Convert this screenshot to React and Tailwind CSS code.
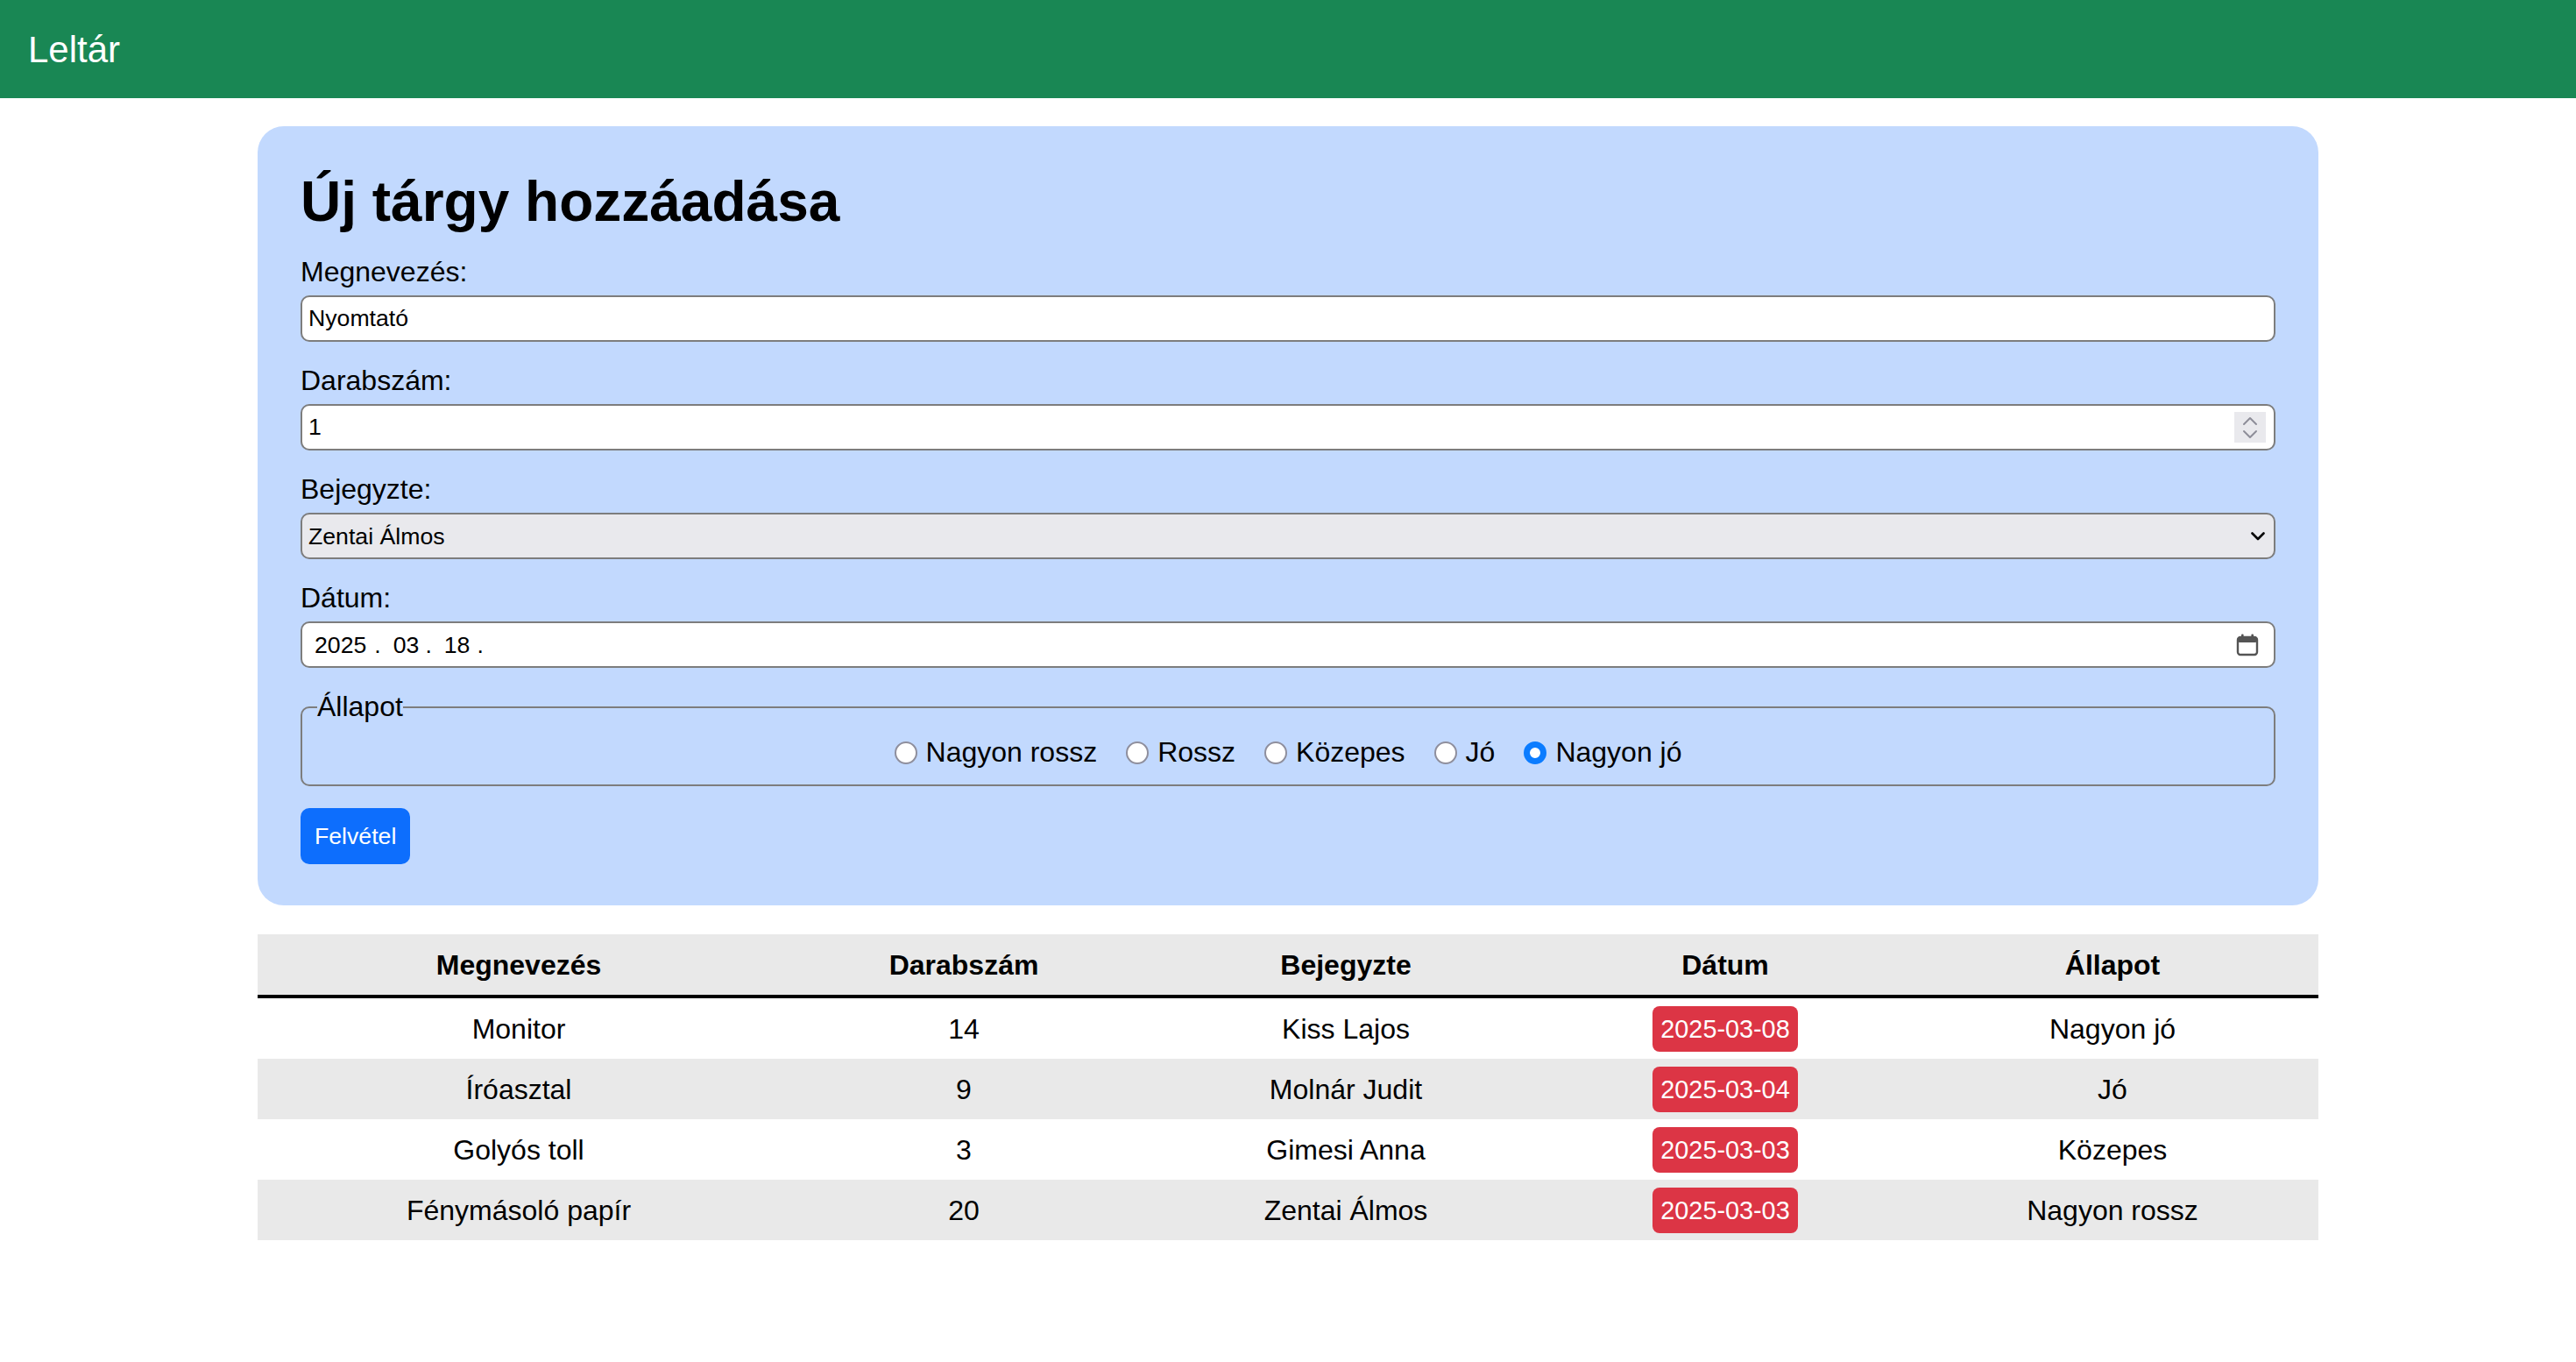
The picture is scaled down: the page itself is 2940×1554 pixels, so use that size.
import { useState } from 'react';

const ITEMS = [
  { name: 'Monitor', qty: 14, by: 'Kiss Lajos', date: '2025-03-08', state: 'Nagyon jó' },
  { name: 'Íróasztal', qty: 9, by: 'Molnár Judit', date: '2025-03-04', state: 'Jó' },
  { name: 'Golyós toll', qty: 3, by: 'Gimesi Anna', date: '2025-03-03', state: 'Közepes' },
  { name: 'Fénymásoló papír', qty: 20, by: 'Zentai Álmos', date: '2025-03-03', state: 'Nagyon rossz' },
];

const STATES = ['Nagyon rossz', 'Rossz', 'Közepes', 'Jó', 'Nagyon jó'];

function Spinner() {
  return (
    <svg width="36" height="35" viewBox="0 0 36 35" className="mr-[9px] shrink-0">
      <rect width="36" height="35" fill="#e9e9ed" />
      <path d="M11 14 L18 7 L25 14" fill="none" stroke="#8e8e99" strokeWidth="2" strokeLinecap="round" strokeLinejoin="round" />
      <path d="M11 22 L18 29 L25 22" fill="none" stroke="#8e8e99" strokeWidth="2" strokeLinecap="round" strokeLinejoin="round" />
    </svg>
  );
}

function Chevron() {
  return (
    <svg width="16" height="10" viewBox="0 0 16 10" className="mr-[10px] shrink-0">
      <path d="M1.5 1.5 L8 8 L14.5 1.5" fill="none" stroke="#000" strokeWidth="2.6" strokeLinecap="round" strokeLinejoin="round" />
    </svg>
  );
}

function CalendarIcon() {
  return (
    <svg width="26" height="26" viewBox="0 0 26 26" className="ml-auto mr-[17px] shrink-0">
      <rect x="2" y="4" width="22" height="20" rx="3" fill="none" stroke="#545454" strokeWidth="2.4" />
      <rect x="2" y="4" width="22" height="6" rx="2" fill="#545454" />
      <rect x="6" y="0.5" width="2.6" height="5" rx="1" fill="#545454" />
      <rect x="17.4" y="0.5" width="2.6" height="5" rx="1" fill="#545454" />
    </svg>
  );
}

export default function App() {
  const [name, setName] = useState('Nyomtató');
  const [qty, setQty] = useState('1');
  const [by, setBy] = useState('Zentai Álmos');
  const [state, setState] = useState('Nagyon jó');

  return (
    <div className="min-h-screen bg-white font-['Liberation_Sans',Arial,sans-serif] text-black">
      {/* Header */}
      <header className="flex h-[112px] items-center bg-[#198754] pl-[32px]">
        <span className="text-[42px] text-white">Leltár</span>
      </header>

      {/* Form card */}
      <form
        onSubmit={(e) => e.preventDefault()}
        className="mx-auto mt-[32px] w-4/5 rounded-[30px] bg-[#c2d9fe] px-[49px] pt-[49px] pb-[47px]"
      >
        <h1 className="mb-[25px] text-[64px] font-bold leading-[74px]">Új tárgy hozzáadása</h1>

        <label className="mb-[8px] block text-[32px] leading-[37px]">Megnevezés:</label>
        <div className="mb-[26px] flex h-[53px] items-center rounded-[10px] border-2 border-[#7d7d7d] bg-white">
          <input
            type="text"
            value={name}
            onChange={(e) => setName(e.target.value)}
            className="h-full flex-1 bg-transparent pl-[7px] text-[26.67px] outline-none"
          />
        </div>

        <label className="mb-[8px] block text-[32px] leading-[37px]">Darabszám:</label>
        <div className="mb-[26px] flex h-[53px] items-center rounded-[10px] border-2 border-[#7d7d7d] bg-white">
          <input
            type="text"
            value={qty}
            onChange={(e) => setQty(e.target.value)}
            className="h-full flex-1 bg-transparent pl-[7px] text-[26.67px] outline-none"
          />
          <Spinner />
        </div>

        <label className="mb-[8px] block text-[32px] leading-[37px]">Bejegyzte:</label>
        <div className="mb-[26px] flex h-[53px] items-center rounded-[10px] border-2 border-[#7d7d7d] bg-[#e9e9ed]">
          <select
            value={by}
            onChange={(e) => setBy(e.target.value)}
            className="h-full flex-1 appearance-none bg-transparent pl-[7px] text-[26.67px] outline-none"
          >
            <option>Kiss Lajos</option>
            <option>Molnár Judit</option>
            <option>Gimesi Anna</option>
            <option>Zentai Álmos</option>
          </select>
          <Chevron />
        </div>

        <label className="mb-[8px] block text-[32px] leading-[37px]">Dátum:</label>
        <div className="mb-[26px] flex h-[53px] items-center rounded-[10px] border-2 border-[#7d7d7d] bg-white pl-[14px] text-[26.67px]">
          <span>2025</span>
          <span className="ml-[9px]">.</span>
          <span className="ml-[14px]">03</span>
          <span className="ml-[7px]">.</span>
          <span className="ml-[14px]">18</span>
          <span className="ml-[8px]">.</span>
          <CalendarIcon />
        </div>

        <fieldset className="rounded-[10px] border-2 border-[#7d7d7d] px-[17px] pt-[15px] pb-[18px]">
          <legend className="text-[32px] leading-[37px]">Állapot</legend>
          <div className="flex items-center justify-center gap-[33px] text-[32px] leading-[37px]">
            {STATES.map((s) => (
              <label key={s} className="flex items-center">
                <input
                  type="radio"
                  name="allapot"
                  checked={state === s}
                  onChange={() => setState(s)}
                  className="h-[26px] w-[26px] appearance-none rounded-full border-2 border-[#8f8f9d] bg-white checked:border-[7px] checked:border-[#0b7cff]"
                />
                <span className="ml-[10px]">{s}</span>
              </label>
            ))}
          </div>
        </fieldset>

        <button
          type="submit"
          className="mt-[25px] h-[64px] rounded-[10px] bg-[#0d6efd] px-[16px] text-[26.67px] text-white"
        >
          Felvétel
        </button>
      </form>

      {/* Inventory table */}
      <table className="mx-auto mt-[33px] w-4/5 table-fixed border-separate border-spacing-0 text-[32px]">
        <colgroup>
          <col className="w-[596px]" />
          <col className="w-[420px]" />
          <col className="w-[452px]" />
          <col className="w-[414px]" />
          <col className="w-[470px]" />
        </colgroup>
        <thead>
          <tr className="bg-[#e9e9e9]">
            {['Megnevezés', 'Darabszám', 'Bejegyzte', 'Dátum', 'Állapot'].map((h) => (
              <th key={h} className="h-[73px] border-b-4 border-black text-center align-middle font-bold">
                {h}
              </th>
            ))}
          </tr>
        </thead>
        <tbody>
          {ITEMS.map((it, i) => (
            <tr key={it.name} className={i % 2 === 1 ? 'bg-[#e9e9e9]' : 'bg-white'}>
              <td className="h-[69px] text-center align-middle">{it.name}</td>
              <td className="h-[69px] text-center align-middle">{it.qty}</td>
              <td className="h-[69px] text-center align-middle">{it.by}</td>
              <td className="h-[69px] text-center align-middle">
                <span className="inline-block rounded-[8px] bg-[#dc3545] px-[9px] py-[9px] text-[28.8px] leading-[34px] text-white">
                  {it.date}
                </span>
              </td>
              <td className="h-[69px] text-center align-middle">{it.state}</td>
            </tr>
          ))}
        </tbody>
      </table>
    </div>
  );
}
